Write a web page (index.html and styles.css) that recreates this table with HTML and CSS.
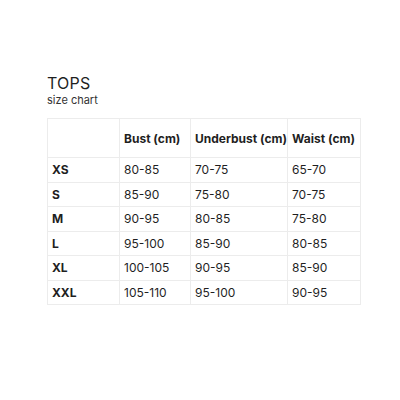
FILE: index.html
```html
<!DOCTYPE html>
<html>
<head>
<meta charset="utf-8">
<link rel="stylesheet" href="styles.css">
</head>
<body>
<div class="page">
  <h1 class="title">TOPS</h1>
  <p class="subtitle">size chart</p>
  <table class="chart">
    <colgroup>
      <col class="c1"><col class="c2"><col class="c3"><col class="c4">
    </colgroup>
    <thead>
      <tr><th></th><th>Bust (cm)</th><th>Underbust (cm)</th><th>Waist (cm)</th></tr>
    </thead>
    <tbody>
      <tr><th>XS</th><td>80-85</td><td>70-75</td><td>65-70</td></tr>
      <tr><th>S</th><td>85-90</td><td>75-80</td><td>70-75</td></tr>
      <tr><th>M</th><td>90-95</td><td>80-85</td><td>75-80</td></tr>
      <tr><th>L</th><td>95-100</td><td>85-90</td><td>80-85</td></tr>
      <tr><th>XL</th><td>100-105</td><td>90-95</td><td>85-90</td></tr>
      <tr><th>XXL</th><td>105-110</td><td>95-100</td><td>90-95</td></tr>
    </tbody>
  </table>
</div>
</body>
</html>
```
FILE: styles.css
```css
html, body {
  margin: 0;
  padding: 0;
  background: #ffffff;
}
.page {
  padding: 73px 0 0 47px;
  font-family: Inter, "Noto Sans", sans-serif;
  color: #1f1f1f;
}
.title {
  margin: 0;
  font-size: 16px;
  font-weight: 400;
  line-height: 20px;
  letter-spacing: 0.2px;
}
.subtitle {
  margin: 0 0 11px 0;
  font-size: 11px;
  line-height: 14px;
  color: #333;
}
.chart {
  border-collapse: collapse;
  table-layout: fixed;
  width: 313px;
  font-size: 12px;
}
.c1 { width: 72px; }
.c2 { width: 71px; }
.c3 { width: 97px; }
.c4 { width: 73px; }
.chart th, .chart td {
  border: 1px solid #ececec;
  padding: 0 0 0 4px;
  text-align: left;
  height: 23.5px;
  white-space: nowrap;
}
.chart thead th {
  height: 37px;
  padding-top: 1px;
  font-weight: 700;
}
.chart tbody th {
  font-weight: 700;
}
.chart td {
  font-weight: 400;
}
```
